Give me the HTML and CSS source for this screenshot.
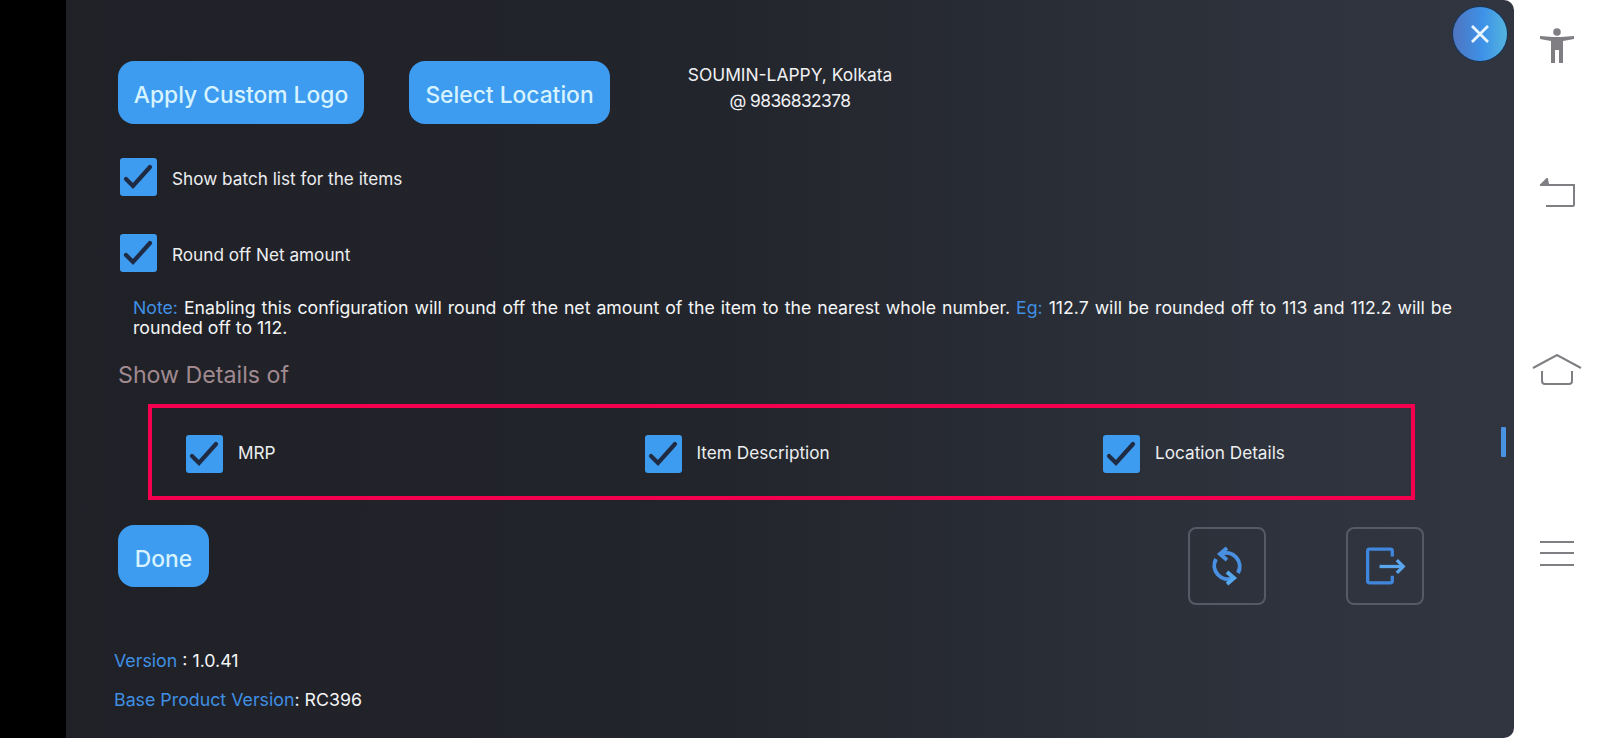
FILE: index.html
```html
<!DOCTYPE html>
<html lang="en">
<head>
<meta charset="utf-8">
<title>Settings</title>
<link rel="stylesheet" href="styles.css">
</head>
<body>
<div class="screen">
  <div class="gutter"></div>
  <main class="panel">
    <button class="close" aria-label="Close">
      <svg width="24" height="24" viewBox="0 0 24 24"><path d="M4 4L20 20M20 4L4 20" stroke="#e8f6ff" stroke-width="2.8" fill="none"/></svg>
    </button>
    <div class="top-row">
      <button class="btn btn-logo"><span class="btn-text">Apply Custom Logo</span></button>
      <button class="btn btn-loc"><span class="btn-text">Select Location</span></button>
      <div class="device"><div>SOUMIN-LAPPY, Kolkata</div><div class="phone">@ 9836832378</div></div>
    </div>
    <label class="check-row row-batch">
      <span class="box"><svg width="37" height="38" viewBox="0 0 37 38"><path d="M6 21L13 28L30 9" stroke="#1f2b42" stroke-width="4.2" fill="none" stroke-linecap="round"/></svg></span>
      <span class="lbl">Show batch list for the items</span>
    </label>
    <label class="check-row row-round">
      <span class="box"><svg width="37" height="38" viewBox="0 0 37 38"><path d="M6 21L13 28L30 9" stroke="#1f2b42" stroke-width="4.2" fill="none" stroke-linecap="round"/></svg></span>
      <span class="lbl">Round off Net amount</span>
    </label>
    <p class="note"><span class="blue">Note:</span> Enabling this configuration will round off the net amount of the item to the nearest whole number. <span class="blue">Eg:</span> 112.7 will be rounded off to 113 and 112.2 will be rounded off to 112.</p>
    <h2 class="details-title">Show Details of</h2>
    <div class="details-box">
      <label class="check-row col-item">
        <span class="box"><svg width="37" height="38" viewBox="0 0 37 38"><path d="M6 21L13 28L30 9" stroke="#1f2b42" stroke-width="4.2" fill="none" stroke-linecap="round"/></svg></span>
        <span>MRP</span>
      </label>
      <label class="check-row col-item">
        <span class="box"><svg width="37" height="38" viewBox="0 0 37 38"><path d="M6 21L13 28L30 9" stroke="#1f2b42" stroke-width="4.2" fill="none" stroke-linecap="round"/></svg></span>
        <span>Item Description</span>
      </label>
      <label class="check-row col-item">
        <span class="box"><svg width="37" height="38" viewBox="0 0 37 38"><path d="M6 21L13 28L30 9" stroke="#1f2b42" stroke-width="4.2" fill="none" stroke-linecap="round"/></svg></span>
        <span>Location Details</span>
      </label>
    </div>
    <div class="action-row">
      <button class="btn btn-done"><span class="btn-text">Done</span></button>
      <div class="icon-btns">
        <button class="icon-btn" aria-label="Sync">
          <svg width="36" height="42" viewBox="0 0 36 42" fill="none" stroke="#4a90e2" stroke-width="4"><path d="M12 9A13.5 13.5 0 0 1 29 28"/><path d="M18 3L11 9L18 15"/><path d="M24 33A13.5 13.5 0 0 1 7 14"/><path d="M18 27L25 33L18 39" stroke="#56a8ee"/></svg>
        </button>
        <button class="icon-btn" aria-label="Log out">
          <svg width="42" height="41" viewBox="0 0 46 44" fill="none" stroke="#3f86dc" stroke-width="3.6"><path d="M31 11V5a2 2 0 0 0-2-2H6a2 2 0 0 0-2 2V38a2 2 0 0 0 2 2H29a2 2 0 0 0 2-2V32"/><path d="M17 22H43" stroke="#5aa6ee"/><path d="M36 15L43 22L36 29" stroke="#5aa6ee"/></svg>
        </button>
      </div>
    </div>
    <div class="version v-first"><span class="blue">Version</span> : 1.0.41</div>
    <div class="version v-second"><span class="blue">Base Product Version</span>: RC396</div>
    <div class="thumb"></div>
  </main>
  <nav class="softkeys">
    <svg class="key key-a" width="38" height="36" viewBox="0 0 38 36" fill="#807d83"><circle cx="19" cy="4" r="3.8"/><path d="M2 8L15 9H23L36 8V11L25 13V35H21V22H17V35H13V13L2 11Z"/></svg>
    <svg class="key key-b" width="36" height="30" viewBox="0 0 36 30" fill="none" stroke="#807d83" stroke-width="2"><path d="M1 7H35V27a1 1 0 0 1-1 1H7"/><path d="M8 1L3 6H9Z" fill="#807d83"/></svg>
    <svg class="key key-h" width="50" height="32" viewBox="0 0 50 32" fill="none" stroke="#807d83" stroke-width="2"><path d="M1 14L25 1L49 14"/><path d="M10 17V27a3 3 0 0 0 3 3H37a3 3 0 0 0 3-3V17"/></svg>
    <svg class="key key-m" width="36" height="26" viewBox="0 0 36 26" fill="none" stroke="#807d83" stroke-width="2"><path d="M1 2H35M1 13H35M1 25H35"/></svg>
  </nav>
</div>
</body>
</html>
```
FILE: styles.css
```css
* { box-sizing: border-box; }
html, body { margin: 0; height: 100%; }
body { font-family: Inter, "Liberation Sans", sans-serif; background: #fff; overflow: hidden; }
.screen { display: flex; width: 1600px; height: 738px; }
.gutter { width: 66px; background: #000; flex: none; }
.panel {
  position: relative; width: 1448px; flex: none; height: 738px;
  padding: 61px 0 0 52px; color: #f2f3f5;
  background: linear-gradient(90deg, #202127 0%, #23252c 45%, #2e333d 85%, #30353f 100%);
  border-radius: 0 10px 10px 0;
}
.close {
  position: absolute; top: 7px; right: 7px; width: 54px; height: 54px; padding: 0; border: 0;
  border-radius: 50%; display: flex; align-items: center; justify-content: center;
  background: linear-gradient(90deg, #4f74c0 0%, #3d92e8 55%, #54b4de 100%);
  box-shadow: 0 0 0 1px #16365e;
}
.top-row { display: flex; gap: 45px; align-items: flex-start; }
.btn {
  height: 63px; padding: 0; border: 0; border-radius: 16px; background: #3d9bf0;
  color: #d6f3ff; font: 500 22.8px Inter, "Liberation Sans", sans-serif; flex: none;
}
.btn-text { display: block; padding-top: 4px; }
.btn-logo { width: 246px; }
.btn-loc { width: 201px; }
.btn-done { width: 91px; height: 62px; }
.device { width: 270px; text-align: center; font-size: 17.4px; line-height: 26px; padding-top: 1px; color: #f0f1f3; }
.phone { letter-spacing: -0.6px; }
.check-row { display: flex; align-items: center; gap: 14px; font-size: 17.2px; color: #eceef0; }
.box { width: 37px; height: 38px; flex: none; background: #3d9bf0; border-radius: 3px; display: block; }
.box svg { display: block; }
.lbl { padding: 2px 0 0 1px; }
.row-batch { margin: 34px 0 0 2px; }
.row-round { margin: 38px 0 0 2px; }
.note {
  margin: 26px 0 0 15px; width: 1319px; font-size: 17.7px; line-height: 20px; font-weight: 400;
  text-align: justify; color: #f4f5f6;
}
.blue { color: #3f8fe3; }
.details-title { margin: 23px 0 0; font-size: 23.2px; line-height: 28px; font-weight: 400; color: #a08a90; }
.details-box {
  display: flex; margin: 15px 0 0 30px; width: 1267px; height: 96px; padding: 0 0 0 34px;
  align-items: center; border: 4.5px solid #f4004e;
}
.col-item { width: 458.5px; flex: none; }
.col-item .box { margin-top: 3px; }
.col-item span:last-child { padding-left: 1px; }
.action-row { display: flex; justify-content: space-between; margin-top: 25px; width: 1306px; align-items: flex-start; }
.icon-btns { display: flex; gap: 80px; margin-top: 2px; }
.icon-btn {
  width: 78px; height: 78px; padding: 0; background: transparent; border: 2px solid #545a66; border-radius: 8px;
  display: flex; align-items: center; justify-content: center;
}
.version { margin-left: -4px; font-size: 17.8px; line-height: 22px; color: #f4f5f6; }
.v-first { margin-top: 45px; }
.v-second { margin-top: 17px; }
.thumb { position: absolute; left: 1435px; top: 427px; width: 5px; height: 30px; background: #4a93e2; border-radius: 1px; }
.softkeys { flex: 1; display: flex; flex-direction: column; align-items: center; background: #fff; padding-top: 28px; }
.key { display: block; flex: none; margin-left: -1px; }
.key-b { margin-top: 114px; }
.key-h { margin-top: 146px; }
.key-m { margin-top: 154px; }
```
